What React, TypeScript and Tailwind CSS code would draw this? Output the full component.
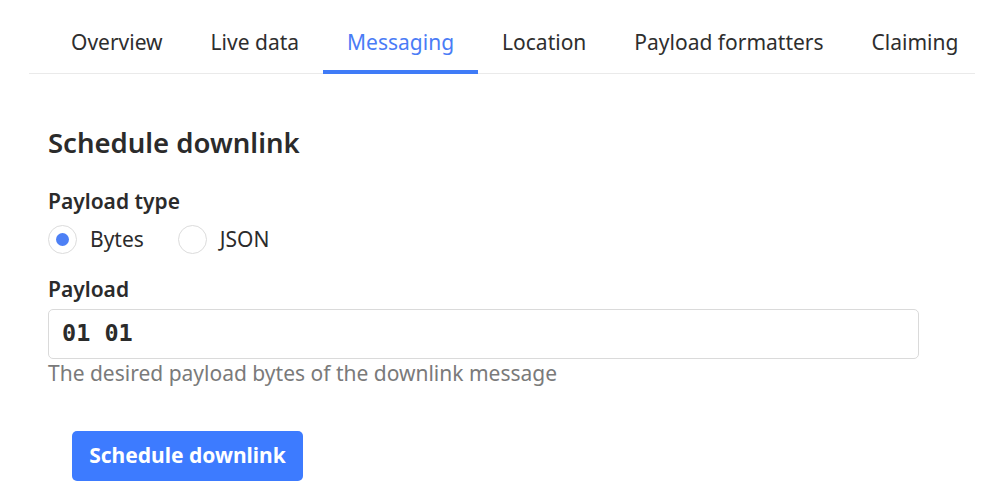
import { useState } from 'react';

const tabs = ['Overview', 'Live data', 'Messaging', 'Location', 'Payload formatters', 'Claiming'];

const App: React.FC = () => {
  const [active, setActive] = useState('Messaging');
  const [type, setType] = useState('bytes');

  return (
    <div className="w-[1000px] h-[500px] bg-white overflow-hidden" style={{ fontFamily: '"Noto Sans", "Open Sans", sans-serif' }}>
      {/* tab bar */}
      <div className="ml-[29px] mr-[25px] pt-[20px] pl-[18px] flex border-b border-[#eaeaea]">
        {tabs.map((t) => (
          <button
            key={t}
            onClick={() => setActive(t)}
            className={
              'shrink-0 whitespace-nowrap px-[24px] h-[54px] pb-[5px] text-[21px] border-b-4 -mb-px ' +
              (t === active ? 'text-[#4a7cf6] border-[#3f7bf7]' : 'text-[#2e2e2e] border-transparent')
            }
          >
            {t}
          </button>
        ))}
      </div>

      <div className="pl-[48px] pt-[50px]">
        <h2 className="text-[27.5px] font-semibold text-[#2b2b2b] leading-[38px]">Schedule downlink</h2>

        <div className="mt-[24px] text-[21px] font-semibold text-[#2b2b2b] leading-[30px]">Payload type</div>
        <div className="mt-[8px] flex items-center gap-[13px] text-[21px] text-[#2b2b2b]">
          <label className="flex items-center gap-[13px] cursor-pointer" onClick={() => setType('bytes')}>
            <span className="w-[29px] h-[29px] rounded-full border border-[#dcdcdc] flex items-center justify-center">
              {type === 'bytes' && <span className="w-[13px] h-[13px] rounded-full bg-[#4d80f5]" />}
            </span>
            <span className="mr-[21px]">Bytes</span>
          </label>
          <label className="flex items-center gap-[13px] cursor-pointer" onClick={() => setType('json')}>
            <span className="w-[29px] h-[29px] rounded-full border border-[#dcdcdc] flex items-center justify-center">
              {type === 'json' && <span className="w-[13px] h-[13px] rounded-full bg-[#4d80f5]" />}
            </span>
            <span>JSON</span>
          </label>
        </div>

        <div className="mt-[18px] text-[21px] font-semibold text-[#2b2b2b] leading-[30px]">Payload</div>
        <div className="mt-[5px] w-[871px] h-[50px] border border-[#dadada] rounded-[5px] flex items-center px-[13px]">
          <span className="text-[23.5px] font-semibold text-[#2b2b2b]" style={{ fontFamily: '"DejaVu Sans Mono", monospace' }}>01 01</span>
        </div>
        <div className="text-[21px] text-[#7a7a7a] leading-[28px]">The desired payload bytes of the downlink message</div>

        <button className="mt-[44px] ml-[24px] w-[231px] h-[50px] rounded-[5px] bg-[#3d7bff] text-white text-[21px] font-bold">
          Schedule downlink
        </button>
      </div>
    </div>
  );
};

export default App;
